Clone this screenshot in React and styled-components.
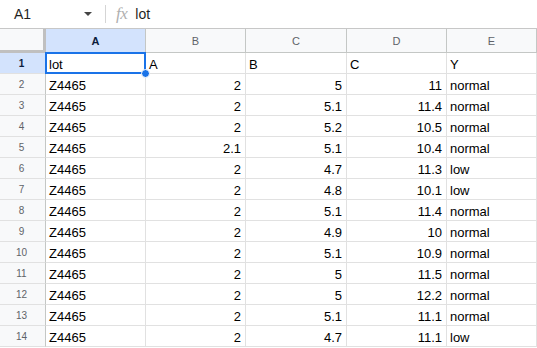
import React from 'react'
import styled, {createGlobalStyle} from 'styled-components'

const GlobalStyle = createGlobalStyle`
  body {
    margin: 0;
    background: #fff;
    font-family: "Liberation Sans", Arial, sans-serif;
    overflow: hidden;
  }
`

const Page = styled.div`
  width: 537px;
  height: 348px;
  overflow: hidden;
`

const FormulaBar = styled.div`
  display: flex;
  align-items: center;
  height: 29px;
  border-bottom: 1px solid #c7c7c7;
  box-sizing: border-box;
`

const NameBox = styled.div`
  display: flex;
  align-items: center;
  justify-content: space-between;
  width: 78px;
  padding: 0 13px 0 14px;
  font-size: 14px;
  color: #1f1f1f;
`

const Caret = styled.span`
  width: 0;
  height: 0;
  border-left: 4px solid transparent;
  border-right: 4px solid transparent;
  border-top: 4px solid #444;
`

const Divider = styled.div`
  width: 1px;
  height: 18px;
  background: #d5d5d5;
`

const Fx = styled.span`
  margin: 0 8px 0 10px;
  font-family: "Liberation Serif", serif;
  font-style: italic;
  font-size: 17px;
  color: #b0b0b0;
  letter-spacing: -0.5px;
`

const FormulaText = styled.span`
  font-size: 14px;
  color: #1f1f1f;
`

const Grid = styled.div`
  display: grid;
  grid-template-columns: 46px 100px 100px 101px 100px 1fr;
  grid-auto-rows: 21px;
  grid-template-rows: 24px;
`

const Corner = styled.div`
  background: #f8f9fa;
  border-right: 3px solid #c0c0c0;
  border-bottom: 3px solid #c0c0c0;
  box-sizing: border-box;
`

const ColHead = styled.div`
  display: flex;
  align-items: center;
  justify-content: center;
  font-size: 11px;
  font-weight: ${p => (p.$active ? 700 : 400)};
  color: ${p => (p.$active ? '#0b1c3c' : '#5f6368')};
  background: ${p => (p.$active ? '#d3e3fd' : '#f8f9fa')};
  border-right: 1px solid #c4c7c5;
  border-bottom: 1px solid #c4c7c5;
  box-sizing: border-box;
  padding-top: 1px;
`

const RowHead = styled.div`
  display: flex;
  align-items: center;
  justify-content: center;
  font-size: 10px;
  font-weight: ${p => (p.$active ? 700 : 400)};
  color: ${p => (p.$active ? '#0b1c3c' : '#5f6368')};
  background: ${p => (p.$active ? '#d3e3fd' : '#f8f9fa')};
  border-right: 1px solid #c4c7c5;
  border-bottom: 1px solid #e1e1e1;
  box-sizing: border-box;
  padding-right: 2px;
`

const Cell = styled.div`
  position: relative;
  display: flex;
  align-items: flex-end;
  justify-content: ${p => (p.$num ? 'flex-end' : 'flex-start')};
  padding: 0 4px 1px 3px;
  font-size: 13px;
  color: #000;
  border-right: 1px solid #e1e1e1;
  border-bottom: 1px solid #e1e1e1;
  box-sizing: border-box;
  white-space: nowrap;
`

const Selection = styled.div`
  position: absolute;
  left: -1px;
  top: -1px;
  right: -1px;
  bottom: -1px;
  border: 2px solid #1a73e8;
  pointer-events: none;
`

const Handle = styled.div`
  position: absolute;
  right: -5px;
  bottom: -5px;
  width: 7px;
  height: 7px;
  border-radius: 50%;
  background: #1a73e8;
  border: 1px solid #fff;
  z-index: 2;
`

const rows = [
  ['Z4465', '2', '5', '11', 'normal'],
  ['Z4465', '2', '5.1', '11.4', 'normal'],
  ['Z4465', '2', '5.2', '10.5', 'normal'],
  ['Z4465', '2.1', '5.1', '10.4', 'normal'],
  ['Z4465', '2', '4.7', '11.3', 'low'],
  ['Z4465', '2', '4.8', '10.1', 'low'],
  ['Z4465', '2', '5.1', '11.4', 'normal'],
  ['Z4465', '2', '4.9', '10', 'normal'],
  ['Z4465', '2', '5.1', '10.9', 'normal'],
  ['Z4465', '2', '5', '11.5', 'normal'],
  ['Z4465', '2', '5', '12.2', 'normal'],
  ['Z4465', '2', '5.1', '11.1', 'normal'],
  ['Z4465', '2', '4.7', '11.1', 'low'],
]

const App = () => (
  <Page>
    <GlobalStyle />
    <FormulaBar>
      <NameBox>
        A1
        <Caret />
      </NameBox>
      <Divider />
      <Fx>fx</Fx>
      <FormulaText>lot</FormulaText>
    </FormulaBar>
    <Grid>
      <Corner />
      {['A', 'B', 'C', 'D', 'E'].map(c => (
        <ColHead key={c} $active={c === 'A'}>{c}</ColHead>
      ))}
      <RowHead $active>1</RowHead>
      <Cell>
        lot
        <Selection />
        <Handle />
      </Cell>
      <Cell>A</Cell>
      <Cell>B</Cell>
      <Cell>C</Cell>
      <Cell>Y</Cell>
      {rows.map((r, i) => (
        <React.Fragment key={i}>
          <RowHead>{i + 2}</RowHead>
          <Cell>{r[0]}</Cell>
          <Cell $num>{r[1]}</Cell>
          <Cell $num>{r[2]}</Cell>
          <Cell $num>{r[3]}</Cell>
          <Cell>{r[4]}</Cell>
        </React.Fragment>
      ))}
    </Grid>
  </Page>
)

export default App
